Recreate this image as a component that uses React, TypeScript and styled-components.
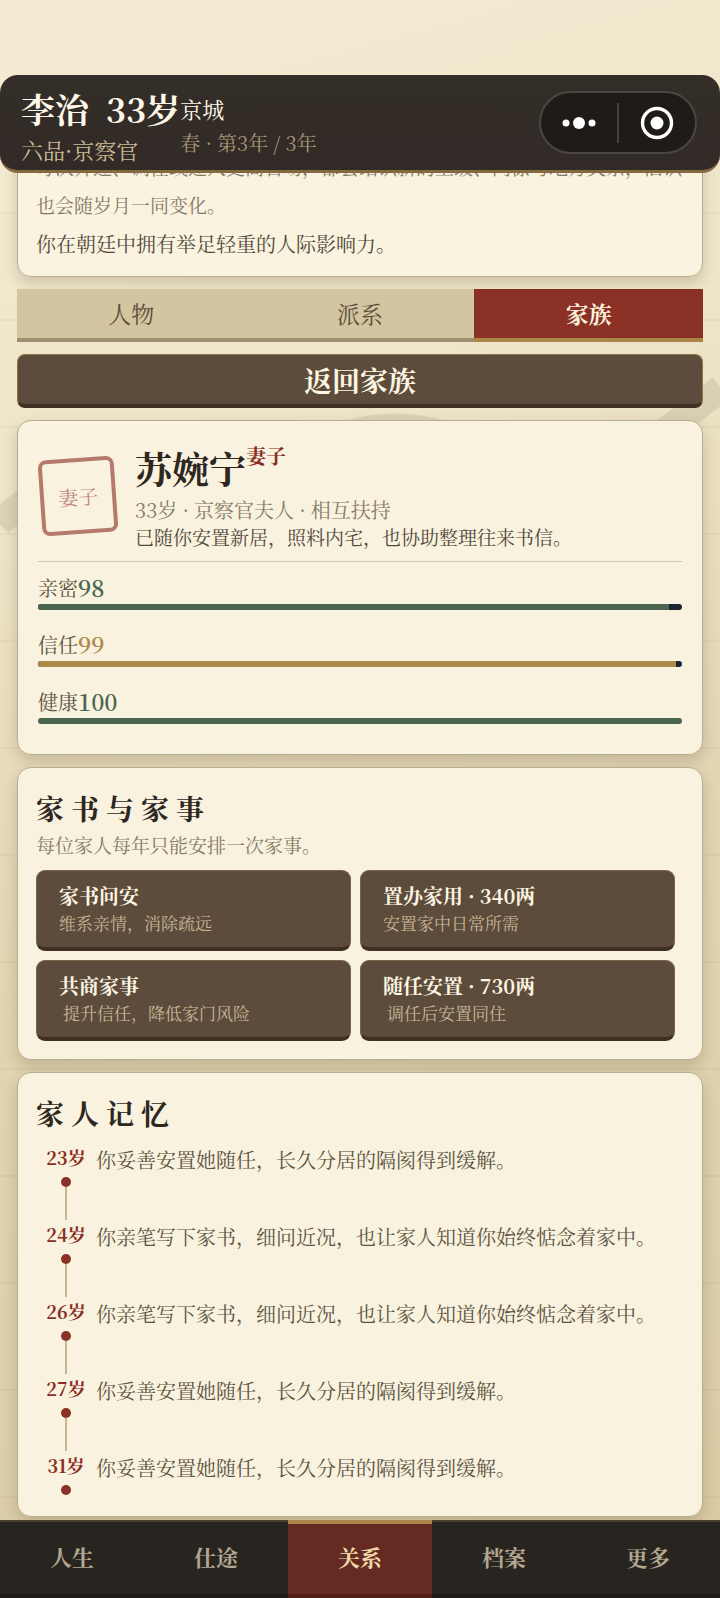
import React from "react";
import styled, { createGlobalStyle } from "styled-components";

const Global = createGlobalStyle`
  *, *::before, *::after { box-sizing: border-box; }
  html { background: #e2d6b6; }
  body {
    margin: 0;
    color: #2e271f;
    font-family: "Noto Serif CJK SC", "Noto Serif SC", "Liberation Serif", "Noto Sans CJK SC", serif;
  }
  button { font: inherit; color: inherit; border: 0; padding: 0; cursor: pointer; }
  h1, h2, p, ol { margin: 0; padding: 0; font-weight: inherit; }
`;

const Screen = styled.div`
  position: relative;
  isolation: isolate;
  display: flex;
  flex-direction: column;
  min-height: 100vh;
  padding-top: 75px;
  background:
    repeating-linear-gradient(180deg, transparent 0 105px, rgba(94, 76, 50, 0.05) 105px 107px),
    linear-gradient(165deg, #f4ebd3 0%, #efe5c9 26%, #e2d6b4 52%, #d9caa3 100%);
`;

const Hills = styled.svg`
  position: absolute;
  z-index: -1;
  left: 0;
  top: 350px;
  width: 100%;
  height: 240px;
`;

const Header = styled.header`
  position: sticky;
  top: 0;
  z-index: 3;
  display: flex;
  align-items: center;
  justify-content: space-between;
  height: 98px;
  padding: 0 23px 0 21px;
  border-radius: 18px;
  border-bottom: 3px solid #84683e;
  background: linear-gradient(180deg, #342e29, #312a26);
`;

const Identity = styled.div`
  display: grid;
  grid-template-columns: auto auto;
  align-items: center;
  padding-top: 10px;
  color: #fdf8e8;
`;

const HeroName = styled.h1`
  font-size: 34px;
  line-height: 44px;
  font-weight: 700;
  white-space: pre;
`;

const Place = styled.span`
  font-size: 22px;
  line-height: 40px;
`;

const Rank = styled.span`
  font-size: 22px;
  line-height: 38px;
  color: #cdbb95;
`;

const Season = styled.span`
  padding-bottom: 14px;
  font-size: 20px;
  line-height: 24px;
  color: #a69677;
`;

const Capsule = styled.div`
  display: flex;
  align-items: center;
  width: 158px;
  height: 63px;
  border: 2px solid #4a4641;
  border-radius: 32px;
  background: #1f1b17;
`;

const CapsuleButton = styled.button`
  flex: 1;
  display: flex;
  align-items: center;
  justify-content: center;
  height: 40px;
  background: none;
  & + & { border-left: 2px solid #45413c; }
`;

const Content = styled.main`
  flex: 1;
  display: flex;
  flex-direction: column;
  gap: 12px;
  margin-top: -3px;
  padding: 0 17px 3px;
  overflow: hidden;
`;

const Card = styled.section<{ $scrolled?: boolean }>`
  margin-top: ${(p) => (p.$scrolled ? -41 : 0)}px;
  padding: 18px 18px 12px;
  border: 1px solid #b9ad91;
  border-radius: 14px;
  background: rgba(249, 243, 224, 0.97);
  box-shadow: 0 6px 14px rgba(80, 62, 36, 0.22);
`;

const Hint = styled.p<{ $tall?: boolean }>`
  font-size: 19px;
  line-height: ${(p) => (p.$tall ? 38 : 30)}px;
  color: #857a66;
`;

const Influence = styled.p`
  font-size: 20px;
  line-height: 40px;
  color: #51483a;
`;

const Tabs = styled.div`
  display: flex;
`;

const Tab = styled.button<{ $active?: boolean }>`
  flex: 1;
  height: 53px;
  font-size: 23px;
  font-weight: ${(p) => (p.$active ? 700 : 400)};
  color: ${(p) => (p.$active ? "#fbf3de" : "#5d4d3b")};
  background: ${(p) => (p.$active ? "#8a3024" : "#d3c59f")};
  border-bottom: 4px solid ${(p) => (p.$active ? "#a98547" : "#9d8f72")};
`;

const BackButton = styled.button`
  height: 54px;
  border: 1px solid #8d7549;
  border-bottom: 4px solid #3f3023;
  border-radius: 8px;
  background: #5d4c3b;
  color: #fdf6e3;
  font-size: 28px;
  line-height: 48px;
  font-weight: 700;
`;

const Profile = styled.div`
  display: flex;
  align-items: center;
  gap: 19px;
  padding: 2px 0 10px;
  margin: 0 2px 9px;
  border-bottom: 1px solid #cfc5ab;
`;

const Seal = styled.div`
  display: flex;
  align-items: center;
  justify-content: center;
  flex: none;
  width: 76px;
  height: 76px;
  margin-left: 2px;
  border: 4px solid #b57a6c;
  border-radius: 8px;
  color: #c08a7c;
  font-size: 20px;
  transform: rotate(-4deg);
`;

const Person = styled.div`
  display: flex;
  flex-direction: column;
`;

const PersonName = styled.h2`
  display: flex;
  align-items: flex-start;
  font-size: 37px;
  line-height: 55px;
  font-weight: 700;
`;

const Relation = styled.span`
  font-size: 20px;
  line-height: 30px;
  color: #8a2c23;
`;

const PersonMeta = styled.p`
  font-size: 20px;
  line-height: 27px;
  color: #857a66;
`;

const PersonNote = styled.p`
  font-size: 19px;
  line-height: 28px;
  color: #51483a;
`;

const Stats = styled.div`
  display: flex;
  flex-direction: column;
  gap: 18px;
  margin: 0 2px 18px;
`;

const StatLabel = styled.div<{ $tone: string }>`
  display: flex;
  align-items: center;
  font-size: 20px;
  line-height: 33px;
  color: #5d5243;
  strong { font-size: 23px; font-weight: 600; color: ${(p) => p.$tone}; }
`;

const Track = styled.div`
  height: 6px;
  overflow: hidden;
  border-radius: 3px;
  background: #1d2330;
`;

const Fill = styled.div<{ $tone: string }>`
  height: 100%;
  background: ${(p) => p.$tone};
`;

const Title = styled.h2`
  font-size: 28px;
  line-height: 44px;
  font-weight: 700;
  letter-spacing: 7px;
`;

const Actions = styled.div`
  display: grid;
  grid-template-columns: 1fr 1fr;
  gap: 9px;
  padding: 10px 9px 6px 0;
`;

const Action = styled.button`
  display: flex;
  flex-direction: column;
  height: 81px;
  padding: 11px 22px 0;
  border: 1px solid #7a6548;
  border-bottom: 4px solid #3f3023;
  border-radius: 9px;
  background: #5d4c3b;
  text-align: left;
`;

const ActionName = styled.span`
  font-size: 20px;
  line-height: 28px;
  font-weight: 700;
  color: #fdf6e3;
`;

const ActionNote = styled.span<{ $indent?: boolean }>`
  padding-left: ${(p) => (p.$indent ? 4 : 0)}px;
  font-size: 17px;
  line-height: 26px;
  color: #c6b696;
`;

const Timeline = styled.ol`
  && { padding-top: 8px; }
  list-style: none;
`;

const Memory = styled.li`
  display: grid;
  grid-template-columns: 60px 1fr;
  height: 77px;
  &:last-child { height: 53px; }
`;

const Age = styled.div`
  display: flex;
  flex-direction: column;
  align-items: center;
  font-size: 18px;
  line-height: 28px;
  font-weight: 700;
  color: #8a2c23;
`;

const Dot = styled.i`
  flex: none;
  width: 10px;
  height: 10px;
  margin-top: 6px;
  border-radius: 50%;
  background: #8a3024;
`;

const Stem = styled.i`
  width: 2px;
  height: 33px;
  background: #c5b795;
`;

const MemoryText = styled.p`
  font-size: 20px;
  line-height: 33px;
  color: #5d5243;
`;

const Nav = styled.nav`
  position: sticky;
  bottom: 0;
  z-index: 3;
  display: flex;
  flex: none;
  height: 78px;
  background: #28241f;
  box-shadow: inset 0 2px #4a4029, inset 0 -4px #1e1a16;
`;

const NavItem = styled.button<{ $active?: boolean }>`
  flex: 1;
  padding-bottom: 6px;
  font-size: 22px;
  font-weight: 700;
  color: ${(p) => (p.$active ? "#f0d9a8" : "#b3a791")};
  background: ${(p) => (p.$active ? "#652b23" : "transparent")};
  box-shadow: ${(p) => (p.$active ? "inset 0 4px #a98547, inset 0 -4px #532019" : "none")};
`;

const GREEN = "#4a6650";
const GOLD = "#ac894a";

const stats = [
  { label: "亲密", value: 98, tone: GREEN },
  { label: "信任", value: 99, tone: GOLD },
  { label: "健康", value: 100, tone: GREEN },
];

const actions = [
  { name: "家书问安", note: "维系亲情，消除疏远" },
  { name: "置办家用 · 340两", note: "安置家中日常所需" },
  { name: "共商家事", note: "提升信任，降低家门风险", indent: true },
  { name: "随任安置 · 730两", note: "调任后安置同住", indent: true },
];

const SETTLED = "你妥善安置她随任，长久分居的隔阂得到缓解。";
const LETTER = "你亲笔写下家书，细问近况，也让家人知道你始终惦念着家中。";

const memories = [
  { age: 23, text: SETTLED },
  { age: 24, text: LETTER },
  { age: 26, text: LETTER },
  { age: 27, text: SETTLED },
  { age: 31, text: SETTLED },
];

export default function App() {
  return (
    <>
      <Global />
      <Screen>
        <Hills viewBox="0 0 720 240" preserveAspectRatio="none" aria-hidden="true">
          <path
            d="M-1 173 C70 110 140 90 220 112 C290 128 320 77 395 77 C470 77 520 130 580 118 C640 104 680 72 721 38"
            fill="none"
            stroke="#5c5340"
            strokeOpacity="0.12"
            strokeWidth="27"
          />
        </Hills>

        <Header>
          <Identity>
            <HeroName>{"李治  33岁"}</HeroName>
            <Place>京城</Place>
            <Rank>六品·京察官</Rank>
            <Season>春 · 第3年 / 3年</Season>
          </Identity>
          <Capsule>
            <CapsuleButton aria-label="更多选项">
              <svg width="34" height="14" viewBox="0 0 34 14" fill="#fff">
                <circle cx="4" cy="7" r="3.5" />
                <circle cx="17" cy="7" r="6" />
                <circle cx="30" cy="7" r="3.5" />
              </svg>
            </CapsuleButton>
            <CapsuleButton aria-label="关闭">
              <svg width="34" height="34" viewBox="0 0 34 34">
                <circle cx="17" cy="17" r="14.5" fill="none" stroke="#fff" strokeWidth="3.4" />
                <circle cx="17" cy="17" r="6.5" fill="#fff" />
              </svg>
            </CapsuleButton>
          </Capsule>
        </Header>

        <Content>
          <Card $scrolled>
            <Hint $tall>
              每次升迁、调任或迁入更高官场，都会结识新的上级、同僚与地方关系，旧识也会随岁月一同变化。
            </Hint>
            <Influence>你在朝廷中拥有举足轻重的人际影响力。</Influence>
          </Card>

          <Tabs role="tablist">
            <Tab role="tab" aria-selected={false}>人物</Tab>
            <Tab role="tab" aria-selected={false}>派系</Tab>
            <Tab role="tab" aria-selected $active>家族</Tab>
          </Tabs>

          <BackButton>返回家族</BackButton>

          <Card>
            <Profile>
              <Seal>妻子</Seal>
              <Person>
                <PersonName>
                  苏婉宁<Relation>妻子</Relation>
                </PersonName>
                <PersonMeta>33岁 · 京察官夫人 · 相互扶持</PersonMeta>
                <PersonNote>已随你安置新居，照料内宅，也协助整理往来书信。</PersonNote>
              </Person>
            </Profile>
            <Stats>
              {stats.map((s) => (
                <div key={s.label}>
                  <StatLabel $tone={s.tone}>
                    {s.label}
                    <strong>{s.value}</strong>
                  </StatLabel>
                  <Track>
                    <Fill $tone={s.tone} style={{ width: `${s.value}%` }} />
                  </Track>
                </div>
              ))}
            </Stats>
          </Card>

          <Card>
            <Title>家书与家事</Title>
            <Hint>每位家人每年只能安排一次家事。</Hint>
            <Actions>
              {actions.map((a) => (
                <Action key={a.name}>
                  <ActionName>{a.name}</ActionName>
                  <ActionNote $indent={a.indent}>{a.note}</ActionNote>
                </Action>
              ))}
            </Actions>
          </Card>

          <Card>
            <Title>家人记忆</Title>
            <Timeline>
              {memories.map((m, i) => (
                <Memory key={m.age}>
                  <Age>
                    {m.age}岁
                    <Dot />
                    {i < memories.length - 1 && <Stem />}
                  </Age>
                  <MemoryText>{m.text}</MemoryText>
                </Memory>
              ))}
            </Timeline>
          </Card>
        </Content>

        <Nav>
          <NavItem>人生</NavItem>
          <NavItem>仕途</NavItem>
          <NavItem $active>关系</NavItem>
          <NavItem>档案</NavItem>
          <NavItem>更多</NavItem>
        </Nav>
      </Screen>
    </>
  );
}
